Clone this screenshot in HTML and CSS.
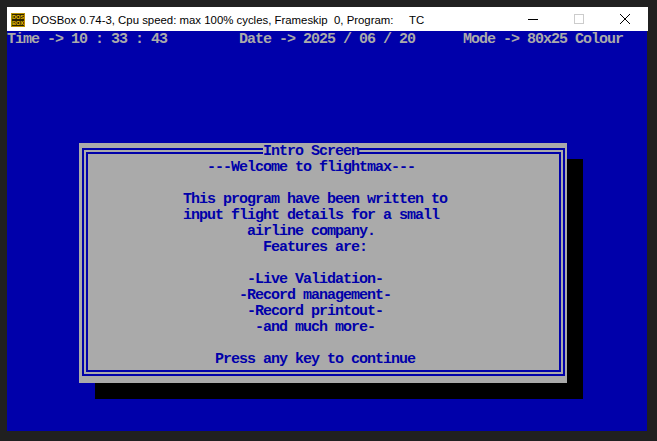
FILE: index.html
```html
<!DOCTYPE html>
<html>
<head>
<meta charset="utf-8">
<link rel="stylesheet" href="styles.css">
</head>
<body>
<div class="window">
  <div class="titlebar">
    <svg class="app-icon" width="14" height="14" viewBox="0 0 14 14">
      <rect x="0.5" y="0.5" width="13" height="13" fill="#2b2300" stroke="#b89000"/>
      <text x="7" y="6.3" font-family="Liberation Sans, sans-serif" font-size="5.6" font-weight="bold" fill="#f2c200" text-anchor="middle">DOS</text>
      <text x="7" y="12.3" font-family="Liberation Sans, sans-serif" font-size="5.6" font-weight="bold" fill="#f2c200" text-anchor="middle">BOX</text>
    </svg>
    <div class="title">DOSBox 0.74-3, Cpu speed: max 100% cycles, Frameskip  0, Program:     TC</div>
    <div class="controls">
      <div class="ctl"><svg width="10" height="10" viewBox="0 0 10 10"><path d="M0 5.5H10" stroke="#000" stroke-width="1"/></svg></div>
      <div class="ctl"><svg width="10" height="10" viewBox="0 0 10 10"><rect x="0.5" y="0.5" width="9" height="9" fill="none" stroke="#cccccc"/></svg></div>
      <div class="ctl"><svg width="10" height="10" viewBox="0 0 10 10"><path d="M0 0L10 10M10 0L0 10" stroke="#000" stroke-width="1"/></svg></div>
    </div>
  </div>
  <div class="screen">
    <div class="row hdr">Time -&gt; 10 : 33 : 43         Date -&gt; 2025 / 06 / 20      Mode -&gt; 80x25 Colour</div>
    <div class="dialog">
      <div class="row">                       <span class="cap">Intro Screen</span></div>
      <div class="row">                ---Welcome to flightmax---</div>
      <div class="row"> </div>
      <div class="row">             This program have been written to</div>
      <div class="row">             input flight details for a small</div>
      <div class="row">                     airline company.</div>
      <div class="row">                       Features are:</div>
      <div class="row"> </div>
      <div class="row">                     -Live Validation-</div>
      <div class="row">                    -Record management-</div>
      <div class="row">                     -Record printout-</div>
      <div class="row">                      -and much more-</div>
      <div class="row"> </div>
      <div class="row">                 Press any key to continue</div>
    </div>
  </div>
</div>
</body>
</html>
```
FILE: styles.css
```css
html, body {
  margin: 0;
  padding: 0;
  background: #202020;
  width: 657px;
  height: 441px;
  overflow: hidden;
}
.window {
  padding: 7px 0 0 7px;
}
.titlebar {
  width: 641px;
  height: 24px;
  background: #ffffff;
  display: flex;
  align-items: center;
}
.app-icon {
  margin-left: 4px;
  margin-top: 1px;
  flex: none;
}
.title {
  margin-left: 7px;
  font-family: "Liberation Sans", Arial, sans-serif;
  font-size: 11.4px;
  color: #000;
  white-space: pre;
  flex: 1;
  padding-top: 1px;
}
.controls {
  display: flex;
  height: 24px;
}
.ctl {
  width: 46px;
  height: 24px;
  display: flex;
  align-items: center;
  justify-content: center;
}
.screen {
  width: 640px;
  height: 400px;
  background: #0000aa;
  font-family: "Liberation Mono", "Courier New", monospace;
  font-weight: bold;
  font-size: 15px;
  letter-spacing: -1px;
  color: #0000aa;
  overflow: hidden;
}
.row {
  height: 16px;
  line-height: 18px;
  white-space: pre;
}
.hdr {
  color: #aaaaaa;
}
.dialog {
  position: relative;
  margin: 96px 0 0 72px;
  width: 488px;
  height: 240px;
  background: #aaaaaa;
  box-shadow: 16px 16px 0 #000000;
}
.dialog::before {
  content: "";
  position: absolute;
  left: 3px;
  right: 2px;
  top: 5px;
  bottom: 7px;
  border: 6px double #0000aa;
}
.dialog .row {
  position: relative;
}
.cap {
  background: #aaaaaa;
}
```
